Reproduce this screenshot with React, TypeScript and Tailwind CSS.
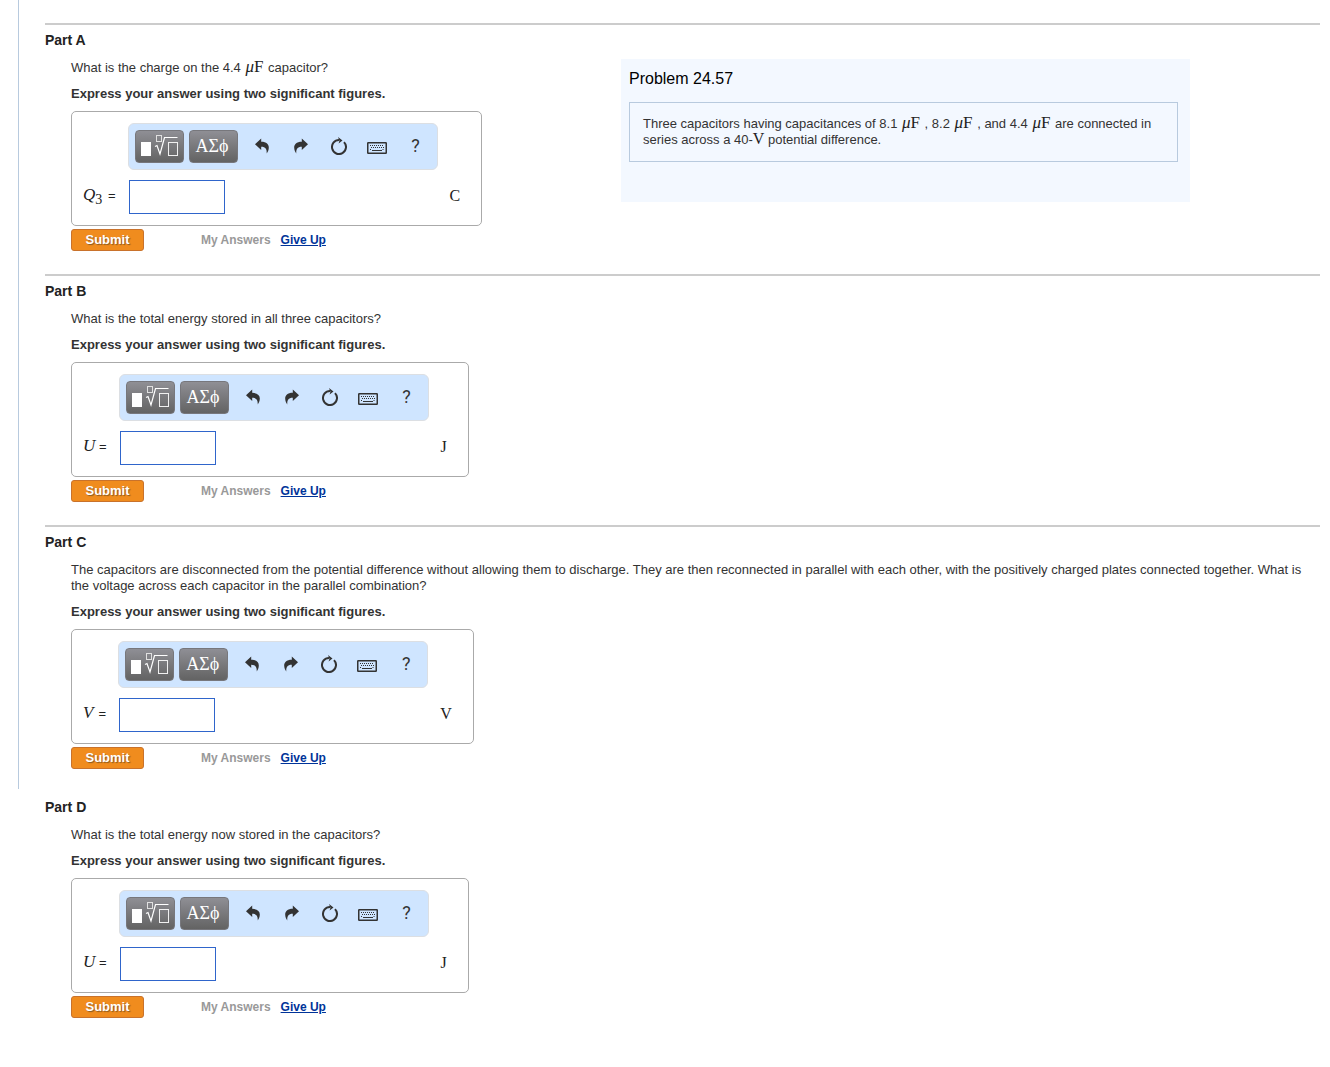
import type { ReactNode } from 'react';

const Mu = () => (
  <span className="mx-px font-['Liberation_Serif',serif] text-[17px] leading-3 text-[#222]">
    <i>μ</i>F
  </span>
);

const TemplatesIcon = () => (
  <svg width="37" height="21" viewBox="0 0 37 21" fill="none" aria-hidden="true">
    <rect x="0" y="7" width="10" height="14" fill="#fff" />
    <rect x="15.5" y="0.5" width="5" height="6" stroke="#e0e0e0" />
    <path d="M14 11.5l2-1 3 8.5 4.5-16.5h13" stroke="#fff" strokeWidth="1.2" />
    <rect x="27.5" y="7.5" width="9" height="13" stroke="#f0f0f0" />
  </svg>
);

const UndoIcon = () => (
  <svg width="14" height="16" viewBox="0 0 14 16" fill="#333" aria-hidden="true">
    <path d="M0 6.2L6.2 0.5V3.8C11.5 3.8 14 6.5 13.8 9.8C13.7 12.2 12.8 14 11.7 15.5C12 11.2 10.6 8.8 6.2 8.8V12Z" />
  </svg>
);

const RedoIcon = () => (
  <svg width="14" height="16" viewBox="0 0 14 16" fill="#333" aria-hidden="true">
    <path d="M14 6.2L7.8 0.5V3.8C2.5 3.8 0 6.5 0.2 9.8C0.3 12.2 1.2 14 2.3 15.5C2 11.2 3.4 8.8 7.8 8.8V12Z" />
  </svg>
);

const ResetIcon = () => (
  <svg width="16" height="18" viewBox="0 0 16 18" fill="none" aria-hidden="true">
    <path d="M13 5.1A7 7 0 1 1 8 3" stroke="#333" strokeWidth="2" />
    <path d="M7 0L11.5 3.4L7.6 6.6L8.4 3.8Z" fill="#333" />
  </svg>
);

const KeyboardIcon = () => (
  <svg width="20" height="12" viewBox="0 0 20 12" fill="none" aria-hidden="true">
    <rect x="0.75" y="0.75" width="18.5" height="10.5" rx="0.5" stroke="#333" strokeWidth="1.5" />
    <path d="M3 3.5h14M3 7.5h1.5M15.5 7.5H17" stroke="#333" strokeDasharray="1 1" />
    <path d="M4 5.5h13" stroke="#333" strokeDasharray="1 1" />
    <path d="M5 8.5h10" stroke="#333" />
  </svg>
);

const Toolbar = () => {
  const dark =
    'mr-[5px] flex h-[33px] w-[49px] items-center justify-center rounded border border-[#77777c] bg-linear-to-b from-[#8f8f95] to-[#636363] text-white';
  const plain = 'flex h-[33px] w-[38px] items-center justify-center text-[#333]';

  return (
    <div className="flex h-[47px] w-[310px] items-center rounded-md border border-[#dcdfe3] bg-[#cfe5ff] pl-1.5">
      <button type="button" aria-label="Templates" className={`${dark} pb-0.5`}>
        <TemplatesIcon />
      </button>
      <button
        type="button"
        aria-label="Symbols"
        className={`${dark} pr-0.5 pb-0.5 font-['Liberation_Serif','DejaVu_Serif',serif] text-lg leading-none`}
      >
        ΑΣϕ
      </button>
      <button type="button" aria-label="Undo" className={`${plain} pb-0.5`}><UndoIcon /></button>
      <button type="button" aria-label="Redo" className={`${plain} pb-0.5 pl-0.5`}><RedoIcon /></button>
      <button type="button" aria-label="Reset" className={`${plain} pb-0.5 pl-0.5`}><ResetIcon /></button>
      <button type="button" aria-label="Keyboard shortcuts" className={`${plain} pt-0.5 pl-0.5`}><KeyboardIcon /></button>
      <button type="button" aria-label="Help" className={`${plain} pb-0.5 pl-1 font-['Roboto',sans-serif] text-lg leading-none`}>?</button>
    </div>
  );
};

interface PartProps {
  id: string;
  symbol: ReactNode;
  unit: string;
  question: ReactNode;
  ruled?: boolean;
  aside?: ReactNode;
}

const Part = ({ id, symbol, unit, question, ruled = true, aside }: PartProps) => (
  <section className={ruled ? 'mt-[3px] border-t-2 border-[#ccc] pt-[7px] pb-5' : 'pb-12'}>
    <h2 className="text-sm leading-4 font-bold text-[#222]">Part {id}</h2>
    <div className="mt-[11px] flex items-start pl-[26px]">
      <div className={aside ? 'w-[550px] shrink-0 pt-px' : 'flex-1 pt-px'}>
        <p className="leading-4">{question}</p>
        <p className="mt-2.5 leading-4 font-bold">Express your answer using two significant figures.</p>
        <div className="mt-[9px] inline-grid grid-cols-[auto_310px_auto] gap-x-3 gap-y-2.5 rounded-[5px] border border-[#aaa] py-[11px] pr-[21px] pl-[11px] align-top">
          <div className="col-start-2">
            <Toolbar />
          </div>
          <label htmlFor={`answer-${id}`} className="col-start-1 self-center pb-0.5 whitespace-nowrap text-[#222]">
            <span className="inline-block min-w-3 font-['Liberation_Serif',serif] text-[17px] leading-none">{symbol}</span> =
          </label>
          <input
            id={`answer-${id}`}
            type="text"
            className="ml-px h-[34px] w-24 border border-[#2f65cb] bg-white px-1 outline-none"
          />
          <span className="self-center pb-0.5 font-['Liberation_Serif',serif] text-base leading-none text-[#222]">{unit}</span>
        </div>
        <div className="mt-[3px] flex h-[22px] items-center text-xs font-bold">
          <button
            type="button"
            className="h-[22px] w-[73px] rounded-[3px] border border-[#c9722b] bg-[#f08c1e] pb-0.5 text-[13px] leading-none text-white text-shadow-[1px_1px_1px_#8a5a20]"
          >
            Submit
          </button>
          <span className="ml-[57px] text-[#999]">My Answers</span>
          <a href="#give-up" className="ml-2.5 text-[#039] underline">Give Up</a>
        </div>
      </div>
      {aside}
    </div>
  </section>
);

const ProblemPanel = () => (
  <aside className="mr-[130px] min-h-[143px] flex-1 bg-[#f3f8ff] px-2 pt-2">
    <h1 className="text-base leading-6 text-black">Problem 24.57</h1>
    <div className="mt-[11px] mr-1 border border-[#b8cade] p-[13px] leading-4">
      Three capacitors having capacitances of 8.1 <Mu /> , 8.2 <Mu /> , and 4.4 <Mu /> are connected in series across
      a 40-<span className="font-['Liberation_Serif',serif] text-base leading-3 text-[#222]">V</span> potential
      difference.
    </div>
  </aside>
);

const App = () => {
  return (
    <main className="min-h-screen bg-white font-['Liberation_Sans',Arial,sans-serif] text-[13px] text-[#333]">
      <div className="ml-[18px] border-l border-[#b8cade] pt-5 pr-2.5 pl-[26px]">
        <Part
          id="A"
          symbol={<><i>Q</i><sub className="mr-0.5 text-sm leading-none">3</sub></>}
          unit="C"
          question={<>What is the charge on the 4.4 <Mu /> capacitor?</>}
          aside={<ProblemPanel />}
        />
        <Part id="B" symbol={<i>U</i>} unit="J" question="What is the total energy stored in all three capacitors?" />
        <Part
          id="C"
          symbol={<i>V</i>}
          unit="V"
          question="The capacitors are disconnected from the potential difference without allowing them to discharge. They are then reconnected in parallel with each other, with the positively charged plates connected together. What is the voltage across each capacitor in the parallel combination?"
        />
      </div>
      <div className="ml-[45px] pt-2.5 pr-2.5">
        <Part
          id="D"
          ruled={false}
          symbol={<i>U</i>}
          unit="J"
          question="What is the total energy now stored in the capacitors?"
        />
      </div>
    </main>
  );
};

export default App;
